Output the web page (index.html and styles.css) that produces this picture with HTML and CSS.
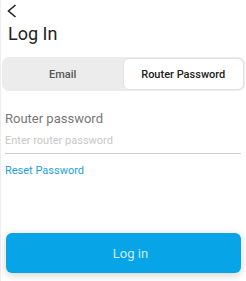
FILE: index.html
```html
<!DOCTYPE html>
<html>
<head>
<meta charset="utf-8">
<link rel="stylesheet" href="styles.css">
</head>
<body>
<div class="screen">
  <div class="top">
    <svg class="back" width="12" height="14" viewBox="0 0 12 14"><path d="M9.5 1 L2.5 7 L9.5 13" fill="none" stroke="#222" stroke-width="1.6"/></svg>
    <h1 class="title">Log In</h1>
  </div>
  <div class="tabs">
    <div class="tab">Email</div>
    <div class="tab active">Router Password</div>
  </div>
  <div class="form">
    <div class="label">Router password</div>
    <div class="input">Enter router password</div>
    <a class="link">Reset Password</a>
  </div>
  <div class="spacer"></div>
  <div class="actions">
    <button class="btn">Log in</button>
  </div>
</div>
</body>
</html>
```
FILE: styles.css
```css
* { box-sizing: border-box; }
html, body { margin: 0; padding: 0; background: #fff; }
body { font-family: Roboto, "Noto Sans", sans-serif; }
.screen { height: 281px; display: flex; flex-direction: column; border-left: 1px solid #eee; }
.top { padding: 4px 0 0 5px; }
.back { display: block; }
.title { margin: 5px 0 0 2px; font-size: 18px; font-weight: 400; color: #222; line-height: 21px; }
.tabs { margin: 13px 1px 0 1px; height: 34px; background: #ececec; border-radius: 7px; display: flex; padding: 1px; }
.tab { flex: 1; display: flex; align-items: center; justify-content: center; font-size: 11px; font-weight: 500; color: #555; border-radius: 6px; }
.tab.active { background: #fff; border: 1px solid #e2e2e2; color: #222; }
.form { padding: 20px 4px 0 4px; }
.label { font-size: 13px; color: #777; line-height: 16px; }
.input { margin-top: 7px; font-size: 11px; color: #c8c8c8; line-height: 14px; padding-bottom: 5px; border-bottom: 1px solid #ccc; margin-right: 1px; }
.link { display: block; margin-top: 10px; font-size: 11px; color: #1e9ee0; line-height: 14px; }
.spacer { flex: 1; }
.actions { padding: 0 5px 8px 5px; }
.btn { width: 100%; height: 40px; border: none; border-radius: 6px; background: #07a4e8; color: #cdeefd; font-family: inherit; font-size: 13px; box-shadow: 0 2px 8px rgba(0,0,0,0.18); padding-left: 20px; }
```
